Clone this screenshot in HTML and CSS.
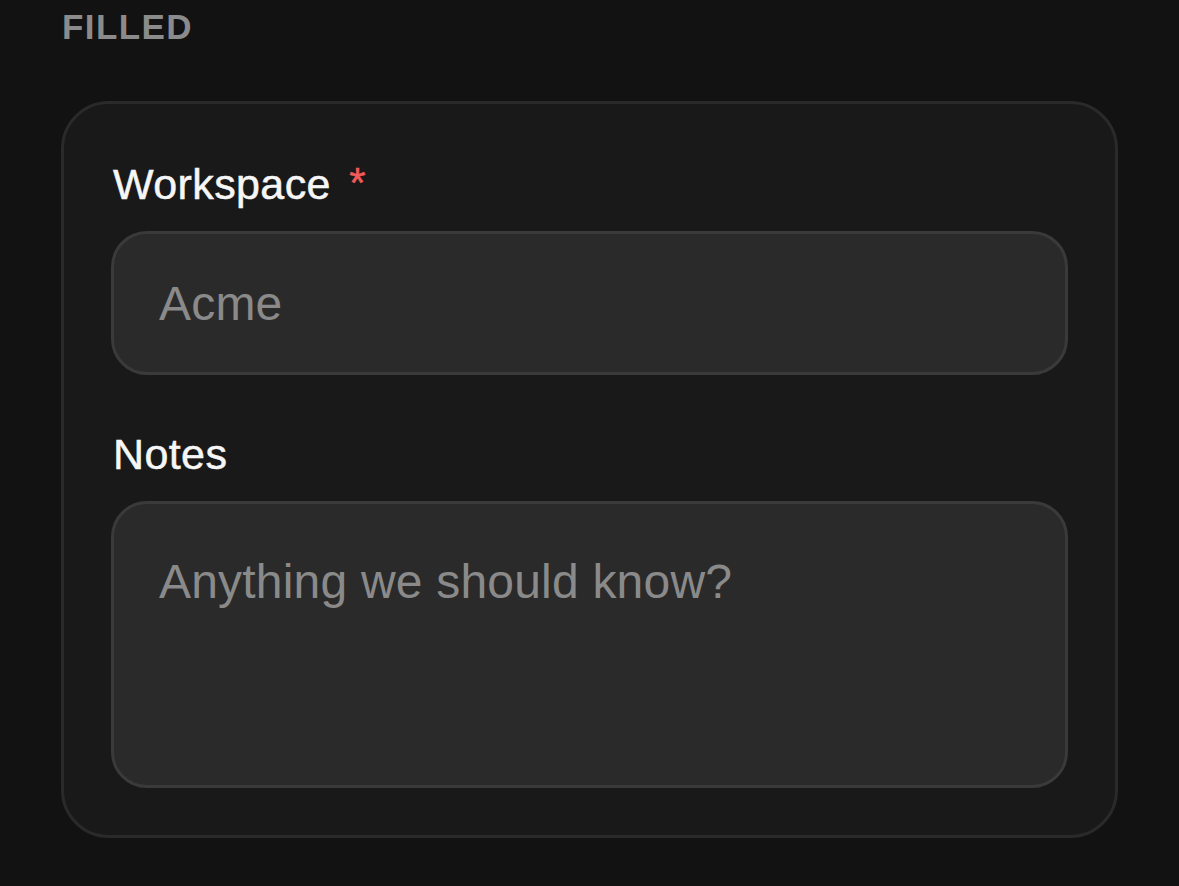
FILE: index.html
```html
<!DOCTYPE html>
<html lang="en">
<head>
<meta charset="utf-8">
<title>Filled form</title>
<link rel="stylesheet" href="styles.css">
</head>
<body>
<main class="page">
  <h2 class="section-title">FILLED</h2>
  <form class="card">
    <div class="field">
      <label class="label" for="ws">Workspace <span class="req">*</span></label>
      <input class="input" id="ws" type="text" placeholder="Acme">
    </div>
    <div class="field">
      <label class="label" for="notes">Notes</label>
      <textarea class="input textarea" id="notes" placeholder="Anything we should know?"></textarea>
    </div>
  </form>
</main>
</body>
</html>
```
FILE: styles.css
```css
html, body {
  margin: 0;
  padding: 0;
  background: #121212;
}
body {
  font-family: "Liberation Sans", Arial, sans-serif;
  color: #f4f4f4;
}
.page {
  padding: 0 61px;
  width: 1057px;
}
.section-title {
  margin: 0;
  padding-top: 4px;
  padding-left: 1px;
  height: 101px;
  box-sizing: border-box;
  font-size: 35px;
  line-height: 46px;
  font-weight: 700;
  letter-spacing: 1.4px;
  color: #8b8b8b;
}
.card {
  display: flex;
  flex-direction: column;
  gap: 47px;
  background: #191919;
  border: 3px solid #2a2a2a;
  border-radius: 48px;
  padding: 47px;
}
.field {
  display: flex;
  flex-direction: column;
  gap: 15px;
}
.label {
  padding-left: 2px;
  font-size: 43px;
  line-height: 64px;
  font-weight: 400;
  letter-spacing: 0.4px;
  color: #f6f6f6;
  -webkit-text-stroke: 0.5px #f6f6f6;
}
.req {
  color: #f05a5a;
  -webkit-text-stroke: 0.5px #f05a5a;
  margin-left: 6px;
  font-size: 42px;
  vertical-align: 2px;
}
.input {
  display: block;
  width: 100%;
  box-sizing: border-box;
  height: 144px;
  margin: 0;
  padding: 0 44px 0 45px;
  background: #2a2a2a;
  border: 3px solid #3a3a3a;
  border-radius: 36px;
  font-family: "Liberation Sans", Arial, sans-serif;
  font-size: 48px;
  letter-spacing: 0.2px;
  color: #e0e0e0;
  outline: none;
}
.input::placeholder {
  color: #8a8a8a;
  opacity: 1;
}
.textarea {
  height: 287px;
  padding: 48px 44px 48px 45px;
  resize: none;
  line-height: 60px;
}
```
